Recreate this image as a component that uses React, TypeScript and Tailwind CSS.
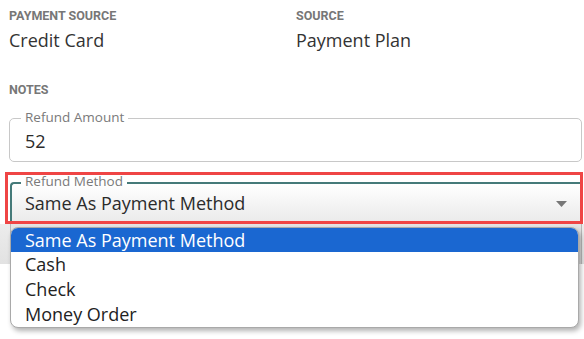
import React from "react";

const sans = { fontFamily: '"Open Sans", "Noto Sans", sans-serif' };
const roboto = { fontFamily: 'Roboto, "Liberation Sans", sans-serif' };

export default function App() {
  return (
    <div className="w-[584px] h-[339px] bg-white overflow-hidden" style={sans}>
      <div className="grid grid-cols-[287px_1fr] pl-[9px] pt-[9px]">
        <div>
          <div className="text-[12.5px] leading-[14px] font-bold text-[#777777]" style={roboto}>PAYMENT SOURCE</div>
          <div className="mt-[5px] text-[18px] leading-[24px] text-[#333333]">Credit Card</div>
        </div>
        <div>
          <div className="text-[12.5px] leading-[14px] font-bold text-[#777777]" style={roboto}>SOURCE</div>
          <div className="mt-[5px] text-[18px] leading-[24px] text-[#333333]">Payment Plan</div>
        </div>
      </div>
      <div className="pl-[9px] mt-[31px] text-[12.5px] leading-[14px] font-bold text-[#777777]" style={roboto}>NOTES</div>

      <fieldset className="ml-[9px] w-[573px] mt-[12px] border border-[#c8c8c8] rounded-[5px] pl-[11px] pr-[10px] pb-[8px]">
        <legend className="px-[4px] text-[13.5px] leading-[16px] pb-[3px] text-[#7a7a7a]">Refund Amount</legend>
        <div className="pt-[1px] pl-[4px] text-[18px] leading-[24px] text-[#2b2b2b]">52</div>
      </fieldset>

      <div className="relative ml-[5px] w-[578px] mt-[10px] border-[3px] border-[#ef4545]">
        <fieldset className="ml-[2px] border-2 border-r-0 border-b-0 border-[#457a79] rounded-tl-[4px] bg-linear-to-b from-white to-[#ebebeb] pl-[9px] pb-[6px]">
          <legend className="px-[4px] text-[13.5px] leading-[13px] pb-[3px] text-[#7a7a7a]">Refund Method</legend>
          <div className="flex items-center justify-between pl-[4px] pr-[13px]">
            <span className="text-[18px] leading-[24px] text-[#2b2b2b]">Same As Payment Method</span>
            <svg width="11" height="6" viewBox="0 0 11 6" className="mt-[2px]">
              <path d="M0 0 L11 0 L5.5 6 Z" fill="#777777" />
            </svg>
          </div>
        </fieldset>

        <div className="absolute left-[2px] top-[52px] w-[569px] bg-white rounded-[8px] border border-[#a9a9a9] overflow-hidden shadow-[2px_3px_5px_rgba(0,0,0,0.3)] z-10">
          <div className="bg-[#1a67d1] text-white text-[18px] leading-[24px] pl-[14px]">Same As Payment Method</div>
          <div className="text-[#222222] text-[18px] leading-[25px] pl-[14px]">Cash</div>
          <div className="text-[#222222] text-[18px] leading-[25px] pl-[14px]">Check</div>
          <div className="text-[#222222] text-[18px] leading-[25px] pl-[14px]">Money Order</div>
        </div>
      </div>

      <div className="bg-linear-to-b from-[#ececec] to-[#e2e2e2] h-[40px] pl-[10px] pr-[2px]">
        <div className="h-full border-x border-[#b8b8b8] bg-linear-to-b from-[#e4e4e4] to-[#d9d9d9]" />
      </div>
    </div>
  );
}
